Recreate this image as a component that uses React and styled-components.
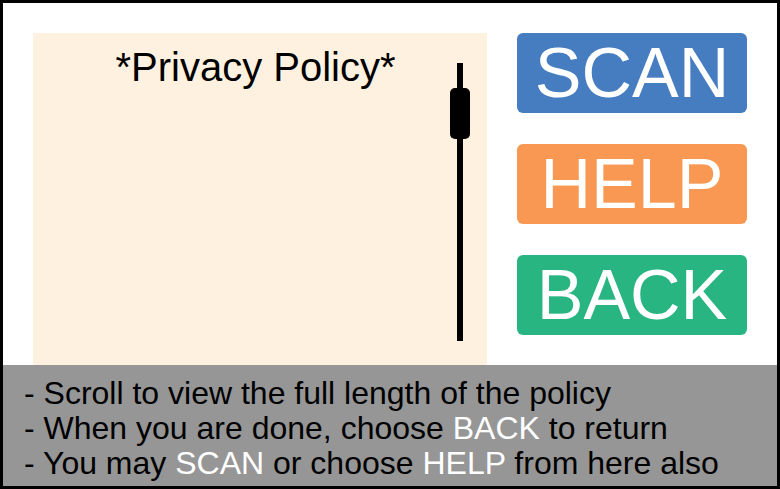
import React, { useState } from "react";
import styled, { createGlobalStyle } from "styled-components";

const GlobalStyle = createGlobalStyle`
  * { box-sizing: border-box; }
  html, body { margin: 0; }
  body { font-family: "Liberation Sans", Arial, sans-serif; color: #000; background: #fff; }
`;

const Screen = styled.main`
  min-height: 100vh;
  display: flex;
  flex-direction: column;
  border: 3px solid #000;
  background: #fff;
`;

const Content = styled.div`
  flex: 1;
  display: grid;
  grid-template-columns: minmax(0, 1fr) 230px;
  gap: 30px;
  padding: 30px 30px 0;
`;

const Policy = styled.section`
  display: grid;
  grid-template-columns: minmax(0, 1fr) 24px;
  padding: 0 15px 0 30px;
  background: #fff1df;
`;

const Title = styled.h1`
  margin: 12px 0 0;
  text-align: center;
  font-size: 40px;
  line-height: 44px;
  font-weight: 400;
  white-space: nowrap;
`;

const Scroller = styled.input`
  appearance: none;
  writing-mode: vertical-lr;
  width: 24px;
  height: 278px;
  margin: 30px 0 0;
  background: transparent;

  &::-webkit-slider-runnable-track {
    width: 6px;
    height: 100%;
    background: #000;
  }

  &::-webkit-slider-thumb {
    appearance: none;
    width: 20px;
    height: 51px;
    margin-left: -7px;
    border-radius: 5px;
    background: #000;
  }
`;

const Actions = styled.nav`
  display: flex;
  flex-direction: column;
  gap: 31px;
`;

const tones = { scan: "#467cc0", help: "#f89852", back: "#28b581" };

const ActionButton = styled.button`
  height: 80px;
  padding: 0;
  border: 0;
  border-radius: 6px;
  background: ${({ $tone }) => tones[$tone]};
  color: #fff;
  font-family: inherit;
  font-size: 70px;
  line-height: 80px;
  cursor: pointer;
`;

const Instructions = styled.ul`
  margin: 0;
  padding: 11px 21px 5px;
  list-style: none;
  background: #969696;
  font-size: 32px;
  line-height: 35px;
  white-space: nowrap;
`;

const Keyword = styled.span`
  color: #fff;
`;

export default function App() {
  const [position, setPosition] = useState(11);
  return (
    <>
      <GlobalStyle />
      <Screen>
        <Content>
          <Policy>
            <Title>*Privacy Policy*</Title>
            <Scroller
              type="range"
              min="0"
              max="100"
              value={position}
              onChange={(event) => setPosition(Number(event.target.value))}
              aria-label="Scroll privacy policy"
            />
          </Policy>
          <Actions>
            <ActionButton type="button" $tone="scan">SCAN</ActionButton>
            <ActionButton type="button" $tone="help">HELP</ActionButton>
            <ActionButton type="button" $tone="back">BACK</ActionButton>
          </Actions>
        </Content>
        <Instructions>
          <li>- Scroll to view the full length of the policy</li>
          <li>- When you are done, choose <Keyword>BACK</Keyword> to return</li>
          <li>- You may <Keyword>SCAN</Keyword> or choose <Keyword>HELP</Keyword> from here also</li>
        </Instructions>
      </Screen>
    </>
  );
}
